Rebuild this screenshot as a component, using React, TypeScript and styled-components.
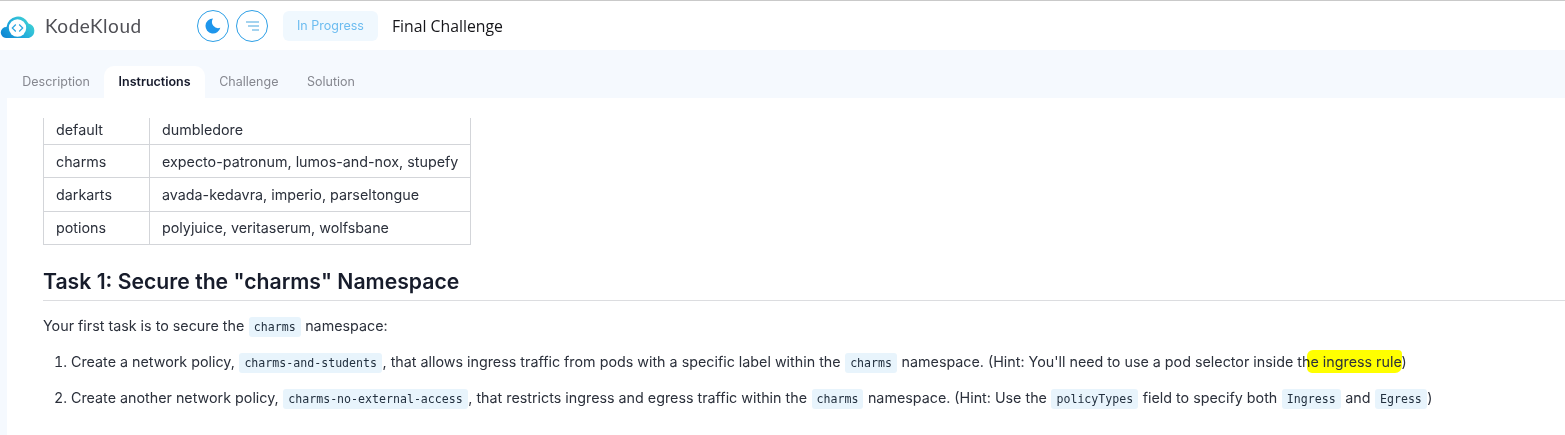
import React from 'react'
import styled, { createGlobalStyle } from 'styled-components'

const TABS = ['Description', 'Instructions', 'Challenge', 'Solution']

const ROWS = [
  ['default', 'dumbledore'],
  ['charms', 'expecto-patronum, lumos-and-nox, stupefy'],
  ['darkarts', 'avada-kedavra, imperio, parseltongue'],
  ['potions', 'polyjuice, veritaserum, wolfsbane'],
]

const Logo = () => (
  <svg width="37" height="26" viewBox="0 0 37 26">
    <defs>
      <linearGradient id="cloud" x1="0" y1="1" x2="1" y2="0.4">
        <stop offset="0" stopColor="#0b7fd0" />
        <stop offset="0.5" stopColor="#1fa9dd" />
        <stop offset="1" stopColor="#3fd0d4" />
      </linearGradient>
    </defs>
    <path
      d="M6 25A5.500 5.500 0 0 1 6.500 14 11.500 11.500 0 0 1 28.500 10.500 7.500 7.500 0 0 1 29 25z"
      fill="url(#cloud)"
    />
    <circle cx="17.500" cy="15" r="8.700" fill="#fff" />
    <path
      d="M15.800 11.500l-3.500 3.500 3.500 3.500M19.200 11.500l3.500 3.500-3.500 3.500"
      fill="none"
      stroke="#2aa5e0"
      strokeWidth="1.200"
    />
  </svg>
)

const MoonIcon = () => (
  <svg width="16" height="16" viewBox="0 0 16 16">
    <path
      d="M8 0.500A7.500 7.500 0 1 0 15.300 9.700 6.200 6.200 0 0 1 8 0.500z"
      fill="#1e96ec"
    />
  </svg>
)

const MenuIcon = () => (
  <svg width="13" height="10" viewBox="0 0 13 10">
    <path
      d="M0 1h13M2 5h11M6 9h7"
      fill="none"
      stroke="#4aa8e0"
      strokeWidth="1.200"
    />
  </svg>
)

export default function App() {
  return (
    <Page>
      <GlobalStyle />
      <TopBar>
        <Brand>
          <Logo />
          <BrandName>KodeKloud</BrandName>
        </Brand>
        <RoundButton>
          <MoonIcon />
        </RoundButton>
        <RoundButton>
          <MenuIcon />
        </RoundButton>
        <StatusPill>In Progress</StatusPill>
        <Title>Final Challenge</Title>
      </TopBar>
      <TabBar>
        {TABS.map((tab) => (
          <Tab key={tab} $active={tab === 'Instructions'}>
            {tab}
          </Tab>
        ))}
      </TabBar>
      <Content>
        <Table>
          <tbody>
            {ROWS.map(([house, names]) => (
              <tr key={house}>
                <Cell>{house}</Cell>
                <Cell>{names}</Cell>
              </tr>
            ))}
          </tbody>
        </Table>
        <Heading>Task 1: Secure the "charms" Namespace</Heading>
        <Paragraph>
          Your first task is to secure the <Code>charms</Code> namespace:
        </Paragraph>
        <Steps>
          <Step>
            Create a network policy, <Code>charms-and-students</Code>, that allows ingress
            traffic from pods with a specific label within the <Code>charms</Code> namespace.
            (Hint: You'll need to use a pod selector inside th
            <Marker>e ingress rule</Marker>)
          </Step>
          <Step>
            Create another network policy, <Code>charms-no-external-access</Code>, that
            restricts ingress and egress traffic within the <Code>charms</Code> namespace.
            (Hint: Use the <Code>policyTypes</Code> field to specify both <Code>Ingress</Code>{' '}
            and <Code>Egress</Code>)
          </Step>
        </Steps>
      </Content>
    </Page>
  )
}

const GlobalStyle = createGlobalStyle`
  html, body {
    margin: 0;
    padding: 0;
    background: #fff;
    overflow: hidden;
  }
`

const Page = styled.div`
  width: 1565px;
  height: 435px;
  overflow: hidden;
  display: flex;
  flex-direction: column;
  background: #f5f9fe;
  font-family: Inter, 'Liberation Sans', sans-serif;
  color: #2b303b;
`

const TopBar = styled.header`
  height: 49px;
  flex: none;
  display: flex;
  align-items: center;
  gap: 7px;
  border-top: 1px solid #c9c9c9;
  background: #fff;
`

const Brand = styled.div`
  width: 190px;
  display: flex;
  align-items: center;
  gap: 8px;
`

const BrandName = styled.span`
  font-family: Lato, sans-serif;
  font-size: 19px;
  letter-spacing: 0.5px;
  color: #505056;
`

const RoundButton = styled.button`
  width: 32px;
  height: 32px;
  padding: 0;
  display: flex;
  align-items: center;
  justify-content: center;
  border: 1px solid #2d9fe6;
  border-radius: 50%;
  background: #fff;
`

const StatusPill = styled.span`
  margin-left: 8px;
  padding: 0 14px;
  height: 30px;
  display: flex;
  align-items: center;
  border-radius: 6px;
  background: #f0f8fe;
  color: #6cbcf0;
  font-size: 12.500px;
`

const Title = styled.h1`
  margin: 0 0 0 7px;
  font-family: 'Open Sans', sans-serif;
  font-size: 15.800px;
  font-weight: 500;
  color: #16161a;
`

const TabBar = styled.nav`
  height: 48px;
  flex: none;
  display: flex;
  align-items: flex-end;
  padding-left: 8px;
`

const Tab = styled.div<{ $active?: boolean }>`
  height: 32px;
  padding: 0 14.300px 2px;
  box-sizing: border-box;
  display: flex;
  align-items: center;
  border-radius: 10px 10px 0 0;
  font-size: 12.500px;
  font-weight: ${(p) => (p.$active ? 600 : 400)};
  color: ${(p) => (p.$active ? '#15192a' : '#85878f')};
  background: ${(p) => (p.$active ? '#fff' : 'transparent')};
`

const Content = styled.main`
  flex: 1;
  margin-left: 7px;
  padding: 20px 0 0 36px;
  background: #fff;
  font-size: 14.300px;
`

const Table = styled.table`
  border-collapse: collapse;
  border: 1px solid #d3d5d9;
  border-top: 0;
`

const Cell = styled.td`
  height: 32.400px;
  padding: 0 12px;
  border: 1px solid #d3d5d9;

  &:first-child {
    width: 81px;
  }

  tr:first-child & {
    height: 22px;
    padding-bottom: 4px;
    border-top: 0;
  }
`

const Heading = styled.h2`
  margin: 21px 0 0;
  padding-bottom: 4px;
  border-bottom: 1px solid #dcdde0;
  font-size: 21.200px;
  line-height: 30px;
  font-weight: 600;
  color: #171c2b;
`

const Paragraph = styled.p`
  margin: 14px 0 0;
  line-height: 22px;
`

const Steps = styled.ol`
  margin: 14px 0 0;
  padding-left: 28px;
`

const Step = styled.li`
  line-height: 22px;
  margin-bottom: 14px;
`

const Code = styled.code`
  padding: 3px 5px;
  margin: 0 0.500px;
  border-radius: 3px;
  background: #e8f4fc;
  font-family: 'DejaVu Sans Mono', monospace;
  font-size: 11.600px;
  line-height: 1;
  color: #22303f;
`

const Marker = styled.span`
  padding: 3px 0 3px 3px;
  margin-left: -3px;
  border-radius: 6px 4px 7px 5px;
  background: #ffff00;
  mix-blend-mode: multiply;
`
